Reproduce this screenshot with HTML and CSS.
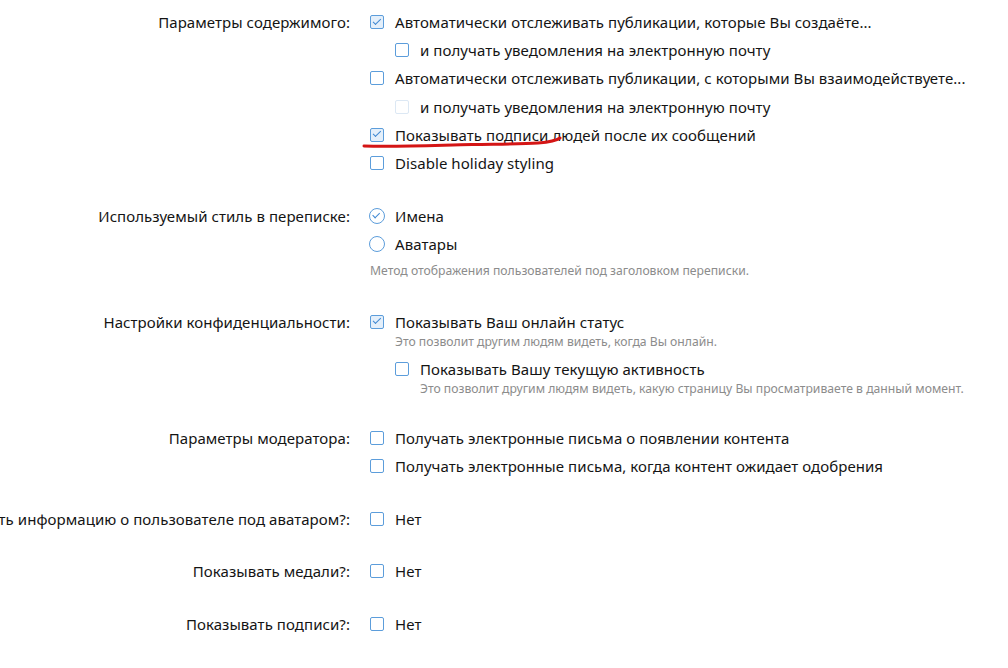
FILE: index.html
```html
<!DOCTYPE html>
<html>
<head>
    <title>Настройки</title>
    <link rel="stylesheet" href="styles.css">
</head>
<body>
    <div class="form">
        <div class="row">
            <div class="label"><span>Параметры содержимого:</span></div>
            <ul class="choices">
                <li>
                    <label class="check on"><span class="box"></span>Автоматически отслеживать публикации, которые Вы создаёте...</label>
                    <ul class="choices sub">
                        <li><label class="check"><span class="box"></span>и получать уведомления на электронную почту</label></li>
                    </ul>
                </li>
                <li>
                    <label class="check"><span class="box"></span>Автоматически отслеживать публикации, с которыми Вы взаимодействуете...</label>
                    <ul class="choices sub">
                        <li><label class="check off"><span class="box"></span>и получать уведомления на электронную почту</label></li>
                    </ul>
                </li>
                <li class="marked"><label class="check on"><span class="box"></span>Показывать подписи людей после их сообщений</label>
                    <svg class="scribble" width="210" height="16" viewBox="0 0 210 16">
                        <path d="M2 10 C 40 11, 80 9, 110 8.5 C 140 8, 160 8, 176 7 C 188 6, 194 5, 198 2" fill="none" stroke="#d41515" stroke-width="3" stroke-linecap="round"/>
                    </svg>
                </li>
                <li><label class="check"><span class="box"></span>Disable holiday styling</label></li>
            </ul>
        </div>

        <div class="row">
            <div class="label"><span>Используемый стиль в переписке:</span></div>
            <div>
                <ul class="choices">
                    <li><label class="radio on"><span class="box"></span>Имена</label></li>
                    <li><label class="radio"><span class="box"></span>Аватары</label></li>
                </ul>
                <p class="hint">Метод отображения пользователей под заголовком переписки.</p>
            </div>
        </div>

        <div class="row">
            <div class="label"><span>Настройки конфиденциальности:</span></div>
            <ul class="choices">
                <li>
                    <label class="check on"><span class="box"></span>Показывать Ваш онлайн статус</label>
                    <p class="explain">Это позволит другим людям видеть, когда Вы онлайн.</p>
                    <ul class="choices sub">
                        <li>
                            <label class="check"><span class="box"></span>Показывать Вашу текущую активность</label>
                            <p class="explain last">Это позволит другим людям видеть, какую страницу Вы просматриваете в данный момент.</p>
                        </li>
                    </ul>
                </li>
            </ul>
        </div>

        <div class="row">
            <div class="label"><span>Параметры модератора:</span></div>
            <ul class="choices">
                <li><label class="check"><span class="box"></span>Получать электронные письма о появлении контента</label></li>
                <li><label class="check"><span class="box"></span>Получать электронные письма, когда контент ожидает одобрения</label></li>
            </ul>
        </div>

        <div class="row">
            <div class="label"><span>Показывать информацию о пользователе под аватаром?:</span></div>
            <ul class="choices">
                <li><label class="check"><span class="box"></span>Нет</label></li>
            </ul>
        </div>

        <div class="row">
            <div class="label"><span>Показывать медали?:</span></div>
            <ul class="choices">
                <li><label class="check"><span class="box"></span>Нет</label></li>
            </ul>
        </div>

        <div class="row">
            <div class="label"><span>Показывать подписи?:</span></div>
            <ul class="choices">
                <li><label class="check"><span class="box"></span>Нет</label></li>
            </ul>
        </div>
    </div>
</body>
</html>
```

FILE: styles.css
```css
body {
    margin: 0;
    background: #fff;
    color: #141414;
    font-family: "Noto Sans", "Open Sans", sans-serif;
    font-size: 15px;
    letter-spacing: 0.06px;
}

.form {
    padding-top: 12px;
}

.row {
    display: flex;
    gap: 20px;
    margin-bottom: 24.5px;
}

.label {
    width: 350px;
    flex: none;
    display: flex;
    justify-content: flex-end;
    line-height: 20px;
    white-space: nowrap;
}

.choices {
    list-style: none;
    margin: 0;
    padding: 0;
}

.choices li {
    position: relative;
    padding-bottom: 8.2px;
    line-height: 20px;
}

.choices .sub {
    margin-left: 25px;
    padding-top: 8.2px;
}

.choices .sub li:last-child {
    padding-bottom: 0;
}

.check, .radio {
    display: flex;
    align-items: center;
    height: 20px;
    white-space: nowrap;
}

.box {
    width: 14px;
    height: 14px;
    box-sizing: border-box;
    border: 1.5px solid #5c9ddb;
    border-radius: 2px;
    background: #fff;
    margin-right: 11px;
    position: relative;
    flex: none;
}

.check.on .box {
    background: #e4effa;
}

.check.on .box::after {
    content: "";
    position: absolute;
    left: 3.6px;
    top: 0.6px;
    width: 3.4px;
    height: 6.6px;
    border: solid #3f88d2;
    border-width: 0 1.8px 1.8px 0;
    transform: rotate(45deg);
}

.check.off .box {
    border-color: #dce8f4;
}

.radio .box {
    width: 16px;
    height: 16px;
    border-radius: 50%;
    margin-left: -1px;
    margin-right: 10px;
}

.radio.on .box::after {
    content: "";
    position: absolute;
    left: 4.4px;
    top: 2px;
    width: 3.2px;
    height: 6.4px;
    border: solid #3f88d2;
    border-width: 0 1.6px 1.6px 0;
    transform: rotate(45deg);
}

.hint, .explain {
    margin: 0;
    font-size: 12.2px;
    line-height: 18px;
    color: #8c8c8c;
    letter-spacing: 0;
    white-space: nowrap;
}

.hint {
    margin-top: -0.5px;
    margin-bottom: 7.5px;
}

.explain {
    padding-left: 25px;
    margin-top: 1px;
}

.explain.last {
    margin-bottom: -2.5px;
}

.scribble {
    position: absolute;
    left: -8px;
    top: 11px;
}
```
